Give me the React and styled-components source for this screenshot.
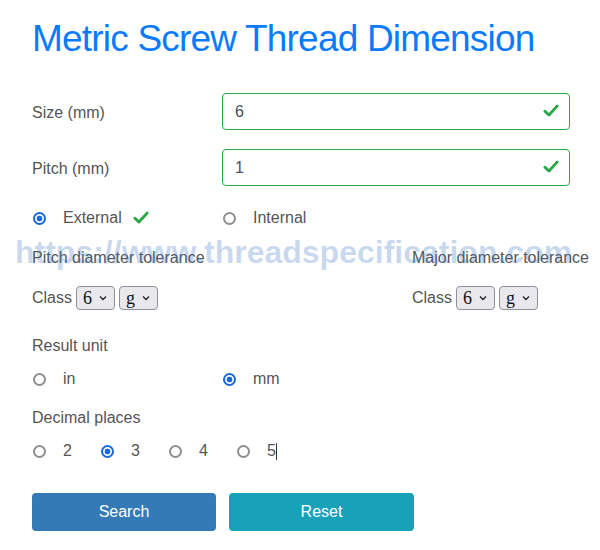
import styled, { createGlobalStyle } from "styled-components";

const GlobalStyle = createGlobalStyle`
  body {
    margin: 0;
    background: #fff;
    font-family: "Liberation Sans", Arial, sans-serif;
  }
`;

function Check({ size = 16 }) {
  return (
    <svg width={size} height={size * 0.85} viewBox="0 0 16 14">
      <path
        d="M1.8 7.4 L5.9 11.3 L14.3 2.2"
        fill="none"
        stroke="#28a745"
        strokeWidth="3"
        strokeLinecap="round"
        strokeLinejoin="round"
      />
    </svg>
  );
}

function Chevron() {
  return (
    <svg width="8" height="6" viewBox="0 0 8 6">
      <path d="M1 1.5 L4 4.5 L7 1.5" fill="none" stroke="#222" strokeWidth="1.3" />
    </svg>
  );
}

function Radio({ checked, label, wide, children }) {
  return (
    <Option $wide={wide}>
      <RadioInput type="radio" checked={checked} readOnly />
      <span>{label}</span>
      {children}
    </Option>
  );
}

function FakeSelect({ value }) {
  return (
    <SelectBox>
      <span>{value}</span>
      <Chevron />
    </SelectBox>
  );
}

function App() {
  return (
    <>
      <GlobalStyle />
      <Page>
        <Title>Metric Screw Thread Dimension</Title>

        <FieldRow>
          <Label>Size (mm)</Label>
          <InputWrap>
            <TextInput defaultValue="6" />
            <CheckIcon>
              <Check />
            </CheckIcon>
          </InputWrap>
        </FieldRow>

        <FieldRow $mt={19}>
          <Label>Pitch (mm)</Label>
          <InputWrap>
            <TextInput defaultValue="1" />
            <CheckIcon>
              <Check />
            </CheckIcon>
          </InputWrap>
        </FieldRow>

        <ChoiceRow $mt={20}>
          <Radio checked label="External">
            <InlineCheck>
              <Check size={16} />
            </InlineCheck>
          </Radio>
          <Radio checked={false} label="Internal" />
        </ChoiceRow>

        <ToleranceRow $mt={16}>
          <Text>Pitch diameter tolerance</Text>
          <Text>Major diameter tolerance</Text>
        </ToleranceRow>

        <ToleranceRow $mt={16}>
          <ClassGroup>
            <Text>Class</Text>
            <FakeSelect value="6" />
            <FakeSelect value="g" />
          </ClassGroup>
          <ClassGroup>
            <Text>Class</Text>
            <FakeSelect value="6" />
            <FakeSelect value="g" />
          </ClassGroup>
        </ToleranceRow>

        <Text $mt={24}>Result unit</Text>
        <ChoiceRow $mt={9}>
          <Radio checked={false} label="in" />
          <Radio checked label="mm" />
        </ChoiceRow>

        <Text $mt={15}>Decimal places</Text>
        <DecimalRow>
          <Radio checked={false} label="2" wide />
          <Radio checked label="3" wide />
          <Radio checked={false} label="4" wide />
          <Radio checked={false} label="5" wide>
            <Caret />
          </Radio>
        </DecimalRow>

        <ButtonRow>
          <Button $bg="#337ab7" $w={184}>Search</Button>
          <Button $bg="#17a2b8" $w={185}>Reset</Button>
        </ButtonRow>

        <Watermark>https://www.threadspecification.com</Watermark>
      </Page>
    </>
  );
}

const Page = styled.div`
  position: relative;
  padding: 17px 0 19px 32px;
  color: #555;
  font-size: 16px;
`;

const Title = styled.h1`
  margin: 0 0 32px;
  font-size: 37px;
  line-height: 44px;
  font-weight: normal;
  letter-spacing: -0.8px;
  color: #0a7bff;
`;

const FieldRow = styled.div`
  display: grid;
  grid-template-columns: 190px 348px;
  align-items: center;
  margin-top: ${(p) => p.$mt || 0}px;
`;

const Label = styled.div`
  line-height: 24px;
  padding-top: 3px;
`;

const InputWrap = styled.div`
  position: relative;
`;

const TextInput = styled.input`
  display: block;
  box-sizing: border-box;
  width: 100%;
  height: 37px;
  padding: 1px 40px 0 12px;
  border: 1px solid #28a745;
  border-radius: 4px;
  font-family: "Liberation Sans", Arial, sans-serif;
  font-size: 16px;
  color: #495057;
  outline: none;
`;

const CheckIcon = styled.span`
  position: absolute;
  right: 11px;
  top: 11px;
  display: flex;
`;

const ChoiceRow = styled.div`
  display: grid;
  grid-template-columns: 190px 348px;
  margin-top: ${(p) => p.$mt || 0}px;
`;

const Option = styled.label`
  display: flex;
  align-items: center;
  gap: 17px;
  line-height: 24px;
  height: 24px;
  width: ${(p) => (p.$wide ? "68px" : "auto")};
`;

const RadioInput = styled.input`
  appearance: none;
  box-sizing: border-box;
  width: 13px;
  height: 13px;
  margin: 0 0 0 1px;
  border-radius: 50%;
  border: 2px solid #8e8e93;
  background: #fff;
  flex: none;

  &:checked {
    border-color: #1768d8;
    background: radial-gradient(circle, #1768d8 0 2.6px, #fff 3.2px);
  }
`;

const InlineCheck = styled.span`
  display: flex;
  margin-left: -6px;
`;

const Caret = styled.span`
  width: 1px;
  height: 17px;
  background: #333;
  margin-left: -17px;
`;

const ToleranceRow = styled.div`
  display: grid;
  grid-template-columns: 380px auto;
  align-items: center;
  margin-top: ${(p) => p.$mt || 0}px;
  white-space: nowrap;
`;

const Text = styled.div`
  line-height: 24px;
  margin-top: ${(p) => p.$mt || 0}px;
`;

const ClassGroup = styled.div`
  display: flex;
  align-items: center;
  gap: 4px;
`;

const SelectBox = styled.div`
  box-sizing: border-box;
  width: 39px;
  height: 24px;
  display: flex;
  align-items: center;
  justify-content: space-between;
  padding: 0 7px 0 6px;
  border: 1px solid #8f8f9d;
  border-radius: 4px;
  background: #e9e9ed;
  font-family: "Liberation Serif", "Times New Roman", serif;
  font-size: 18px;
  color: #111;
`;

const DecimalRow = styled.div`
  display: flex;
  margin-top: 9px;
`;

const ButtonRow = styled.div`
  display: flex;
  gap: 13px;
  margin-top: 30px;
`;

const Button = styled.button`
  width: ${(p) => p.$w}px;
  height: 38px;
  border: 0;
  border-radius: 4px;
  background: ${(p) => p.$bg};
  color: #fff;
  font-family: "Liberation Sans", Arial, sans-serif;
  font-size: 16px;
  cursor: pointer;
`;

const Watermark = styled.div`
  position: absolute;
  left: 15px;
  top: 236px;
  font-size: 32px;
  line-height: 32px;
  font-weight: bold;
  color: rgba(60, 120, 200, 0.28);
  white-space: nowrap;
  pointer-events: none;
`;

export default App;
